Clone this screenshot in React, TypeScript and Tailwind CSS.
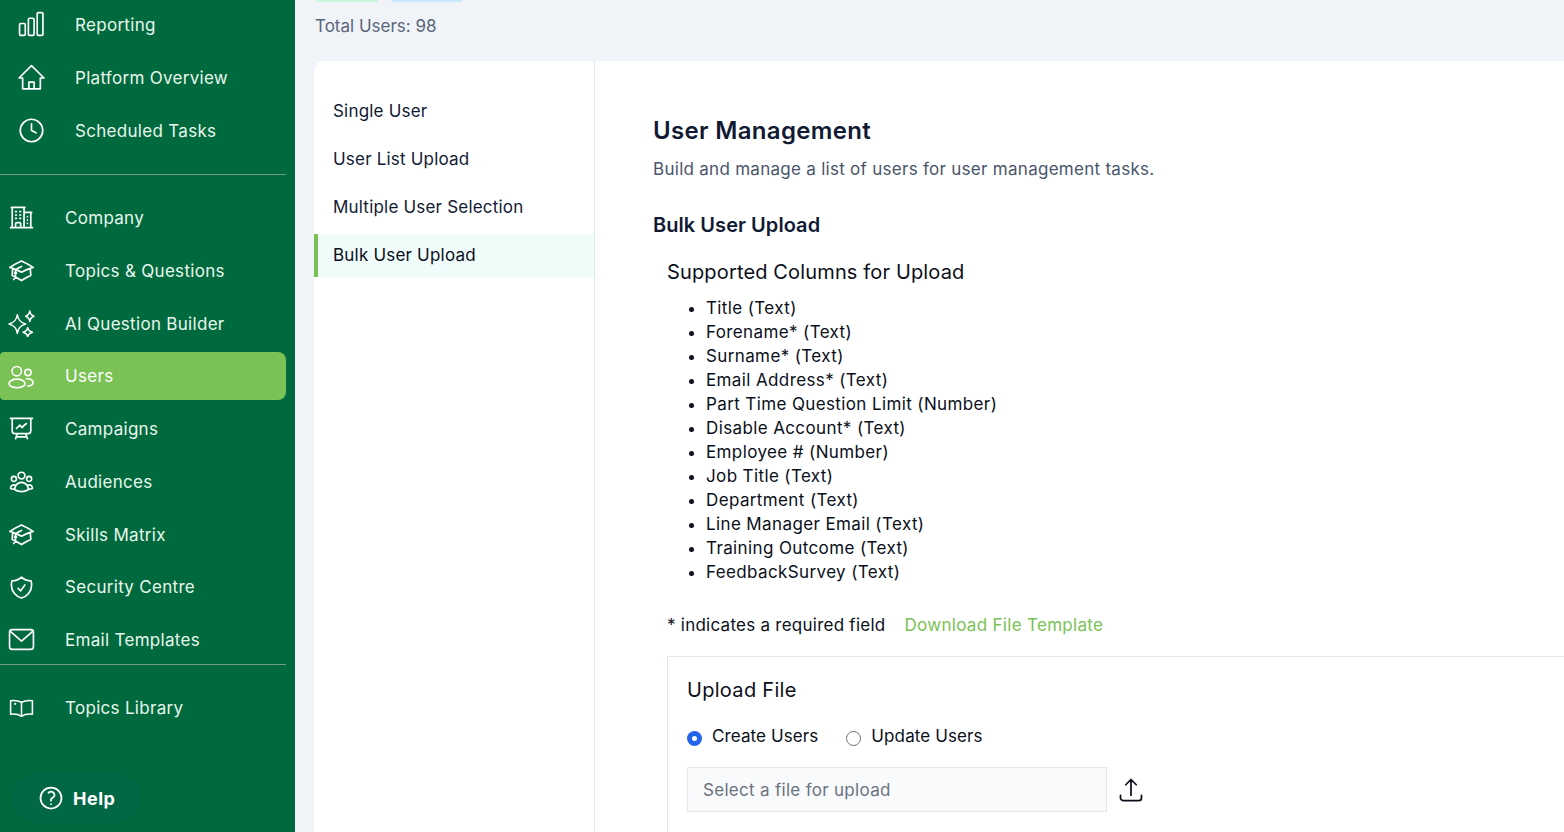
import { Clock } from "lucide-react";
import {
  HiOutlineAcademicCap,
  HiOutlineArrowUpTray,
  HiOutlineBuildingOffice2,
  HiOutlinePresentationChartLine,
  HiOutlineQuestionMarkCircle,
  HiOutlineShieldCheck,
  HiOutlineUserGroup,
} from "react-icons/hi2";

type IconProps = { className?: string };

function BarsIcon({ className }: IconProps) {
  return (
    <svg viewBox="0 0 26 26" fill="none" stroke="currentColor" strokeWidth="1.6" className={className}>
      <rect x="1.5" y="12" width="5.5" height="11.5" rx="1.2" />
      <rect x="10" y="7" width="5.5" height="16.5" rx="1.2" />
      <rect x="18.5" y="1.5" width="5.5" height="22" rx="1.2" />
    </svg>
  );
}

function HomeIcon({ className }: IconProps) {
  return (
    <svg viewBox="0 0 26 26" fill="none" stroke="currentColor" strokeWidth="1.6" strokeLinejoin="round" className={className}>
      <path d="M1 13.5 L13 1.5 L25 13.5 H21.5 V24 H4.5 V13.5 Z" />
      <path d="M10.5 24 V17.5 H15.5 V24" />
    </svg>
  );
}

function SparkIcon({ className }: IconProps) {
  return (
    <svg viewBox="0 0 26 26" fill="none" stroke="currentColor" strokeWidth="1.5" strokeLinejoin="round" className={className}>
      <path d="M9 4.5 C9.8 9.8 11.8 12 17 13.5 C11.8 15 9.8 17.2 9 22.5 C8.2 17.2 6.2 15 1 13.5 C6.2 12 8.2 9.8 9 4.5Z" />
      <path d="M21 1 C21.4 3.8 22.3 5 25 6 C22.3 7 21.4 8.2 21 11 C20.6 8.2 19.7 7 17 6 C19.7 5 20.6 3.8 21 1Z" />
      <path d="M19 17 C19.4 19.6 20.6 20.6 23.5 21.5 C20.6 22.4 19.4 23.4 19 26 C18.6 23.4 17.4 22.4 14.5 21.5 C17.4 20.6 18.6 19.6 19 17Z" />
    </svg>
  );
}

function PeopleIcon({ className }: IconProps) {
  return (
    <svg viewBox="0 0 26 26" fill="none" stroke="currentColor" strokeWidth="1.6" className={className}>
      <circle cx="8.4" cy="7.9" r="4.5" />
      <circle cx="19.2" cy="9.1" r="3" />
      <ellipse cx="8.7" cy="19.7" rx="7.7" ry="4.1" />
      <path d="M17 15.4 C21 14.6 24.2 16.3 24.2 18.9 C24.2 20.9 22 22.2 18.5 22.1" />
    </svg>
  );
}

function MailIcon({ className }: IconProps) {
  return (
    <svg viewBox="0 0 26 26" fill="none" stroke="currentColor" strokeWidth="1.6" strokeLinejoin="round" className={className}>
      <rect x="1.5" y="3.5" width="23" height="19" rx="2.5" />
      <path d="M2 5 L13 14.5 L24 5" />
    </svg>
  );
}

function BookIcon({ className }: IconProps) {
  return (
    <svg viewBox="0 0 26 26" fill="none" stroke="currentColor" strokeWidth="1.5" strokeLinejoin="round" className={className}>
      <path d="M13 7 C10 5.5 6 5 2.5 5.5 V18.5 C6 18 10 18.5 13 20.5 C16 18.5 20 18 23.5 18.5 V5.5 C20 5 16 5.5 13 7Z" />
      <path d="M13 7 V20.5" />
      <circle cx="7" cy="8.5" r="1.1" fill="currentColor" stroke="none" />
    </svg>
  );
}

const topLinks = [
  { label: "Reporting", Icon: BarsIcon },
  { label: "Platform Overview", Icon: HomeIcon },
  { label: "Scheduled Tasks", Icon: Clock },
];

const mainLinks = [
  { label: "Company", Icon: HiOutlineBuildingOffice2 },
  { label: "Topics & Questions", Icon: HiOutlineAcademicCap },
  { label: "AI Question Builder", Icon: SparkIcon },
  { label: "Users", Icon: PeopleIcon, active: true },
  { label: "Campaigns", Icon: HiOutlinePresentationChartLine },
  { label: "Audiences", Icon: HiOutlineUserGroup },
  { label: "Skills Matrix", Icon: HiOutlineAcademicCap },
  { label: "Security Centre", Icon: HiOutlineShieldCheck },
  { label: "Email Templates", Icon: MailIcon },
];

const tabs = ["Single User", "User List Upload", "Multiple User Selection", "Bulk User Upload"];

const columns = [
  "Title (Text)",
  "Forename* (Text)",
  "Surname* (Text)",
  "Email Address* (Text)",
  "Part Time Question Limit (Number)",
  "Disable Account* (Text)",
  "Employee # (Number)",
  "Job Title (Text)",
  "Department (Text)",
  "Line Manager Email (Text)",
  "Training Outcome (Text)",
  "FeedbackSurvey (Text)",
];

function Sidebar() {
  return (
    <aside className="flex h-[832px] w-[295px] shrink-0 flex-col overflow-hidden bg-[#00693e] text-[17px] tracking-[0.3px] text-[#e8f7ec]">
      <div className="-mt-[2px] flex flex-col pb-[17px]">
        {topLinks.map(({ label, Icon }) => (
          <div key={label} className="flex h-[53px] items-center pl-[18px]">
            <Icon className="h-[27px] w-[27px] text-white" strokeWidth={1.5} />
            <span className="ml-[30px] pt-[2px]">{label}</span>
          </div>
        ))}
      </div>
      <div className="mr-[9px] border-t border-[#6f9f7a]" />
      <div className="flex flex-col pt-[16.5px]">
        {mainLinks.map(({ label, Icon, active }) => (
          <div
            key={label}
            className={
              active
                ? "my-[2.375px] mr-[9px] flex h-[48px] items-center rounded-l-[4px] rounded-r-[8px] bg-[#7ac255] pl-[8px] text-white"
                : "flex h-[52.75px] items-center pl-[8px]"
            }
          >
            <Icon className="h-[27px] w-[27px] text-white" />
            <span className="ml-[30px] pt-[2px]">{label}</span>
          </div>
        ))}
      </div>
      <div className="-mt-[2.5px] mr-[9px] border-t border-[#6f9f7a]" />
      <div className="mt-[17px] flex h-[53px] items-center pl-[8px]">
        <BookIcon className="h-[27px] w-[27px] text-white" />
        <span className="ml-[30px] pt-[1px]">Topics Library</span>
      </div>
      <div className="ml-[13px] mt-[38px] flex h-[50px] w-[127px] items-center rounded-[24px] bg-[#026745] pl-[24px] text-white">
        <HiOutlineQuestionMarkCircle className="h-[28px] w-[28px]" />
        <span className="ml-[8px] pt-[1px] text-[18px] font-bold tracking-[0.5px]">Help</span>
      </div>
    </aside>
  );
}

export default function App() {
  return (
    <div className="flex h-[832px] w-[1564px] overflow-hidden bg-[#f0f3f8] font-['Inter',sans-serif] text-[#0b0f1a]">
      <Sidebar />
      <main className="min-w-0 flex-1 pl-[19px]">
        <div className="flex h-[2px] gap-[13px] pl-[2px]">
          <div className="h-[2px] w-[62px] rounded-b bg-[#c9f5dc]" />
          <div className="h-[2px] w-[71px] rounded-b bg-[#c6eafc]" />
        </div>
        <p className="mt-[13px] pl-[1px] pt-[1px] text-[17px] leading-[20px] text-[#5a6679]">Total Users: 98</p>
        <div className="mt-[25px] flex h-[771px] rounded-tl-[10px] bg-white">
          <nav className="w-[281px] shrink-0 border-r border-[#e3e8ef] pt-[26px] text-[17px] tracking-[0.2px]">
            {tabs.map((tab, i) => (
              <div
                key={tab}
                className={
                  i === 3
                    ? "mt-[3px] flex h-[43px] items-center border-l-4 border-[#7ac255] bg-[#effcfa] pl-[15px]"
                    : "flex h-[48px] items-center pl-[19px] pt-[2px] text-[#111a33]"
                }
              >
                {tab}
              </div>
            ))}
          </nav>
          <section className="min-w-0 flex-1 pl-[58px] pt-[54px]">
            <h1 className="text-[24px] font-semibold leading-[32px] tracking-[0.33px] text-[#111a33]">User Management</h1>
            <p className="mt-[10px] text-[17px] leading-[24px] tracking-[0.28px] text-[#4a556b]">
              Build and manage a list of users for user management tasks.
            </p>
            <h2 className="mt-[30px] text-[20px] font-semibold leading-[28px] tracking-[0.05px] text-[#111a33]">Bulk User Upload</h2>
            <div className="pl-[14px]">
              <h3 className="mt-[19px] text-[20px] leading-[28px] tracking-[0.15px]">Supported Columns for Upload</h3>
              <ul className="mt-[10px] list-disc pl-[39px] text-[17px] leading-[24px] tracking-[0.38px]">
                {columns.map((c) => (
                  <li key={c}>{c}</li>
                ))}
              </ul>
              <div className="mt-[29px] flex text-[17px] leading-[24px] tracking-[0.25px]">
                <span>* indicates a required field</span>
                <span className="ml-[19px] tracking-[0.3px] text-[#7ac255]">Download File Template</span>
              </div>
              <div className="mt-[19px] h-[300px] border border-r-0 border-[#e3e8ef] pl-[19px] pt-[19px]">
                <div className="text-[20px] leading-[28px] tracking-[0.3px]">Upload File</div>
                <div className="mt-[20px] flex items-center text-[17px] leading-[24px] tracking-[0.1px]">
                  <span className="mt-[4px] flex h-[15px] w-[15px] items-center justify-center rounded-full bg-[#2563eb]">
                    <span className="h-[5px] w-[5px] rounded-full bg-white" />
                  </span>
                  <span className="ml-[10px]">Create Users</span>
                  <span className="ml-[28px] mt-[4px] h-[15px] w-[15px] rounded-full border border-[#6b7280]" />
                  <span className="ml-[10px]">Update Users</span>
                </div>
                <div className="mt-[19px] flex items-center">
                  <div className="flex h-[45px] w-[420px] items-center border border-[#e3e8ef] bg-[#f8fafc] pl-[15px] pt-[2px] text-[17px] tracking-[0.3px] text-[#6b7280]">
                    Select a file for upload
                  </div>
                  <HiOutlineArrowUpTray className="ml-[10px] h-[28px] w-[28px]" />
                </div>
              </div>
            </div>
          </section>
        </div>
      </main>
    </div>
  );
}
